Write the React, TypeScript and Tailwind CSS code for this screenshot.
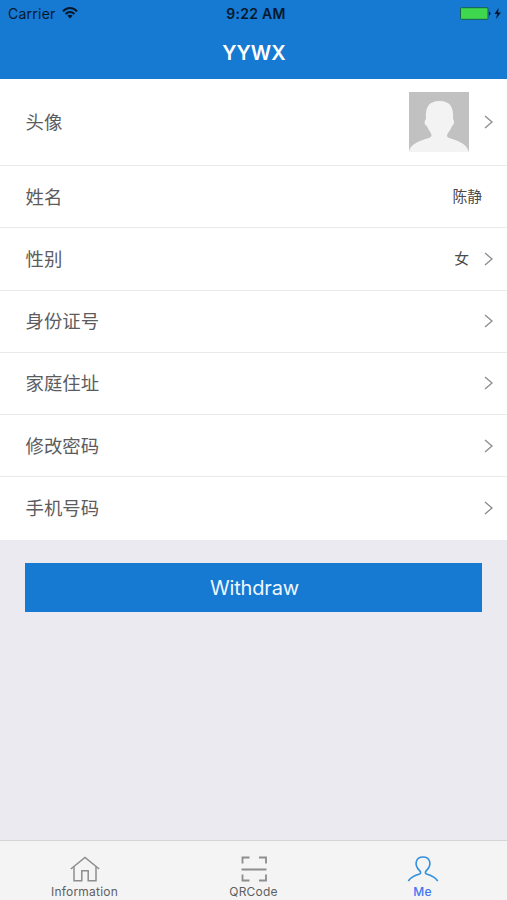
interface ProfileRow {
  label: string
  value?: string
  link?: boolean
}

const rows: ProfileRow[] = [
  { label: '姓名', value: '陈静' },
  { label: '性别', value: '女', link: true },
  { label: '身份证号', link: true },
  { label: '家庭住址', link: true },
  { label: '修改密码', link: true },
  { label: '手机号码', link: true },
]

function Chevron() {
  return (
    <svg className="ml-[15px] h-[14px] w-[9px] shrink-0" viewBox="0 0 9 14" fill="none" stroke="#8c8c8e" strokeWidth="1.3">
      <path d="M1 1l7 6-7 6" />
    </svg>
  )
}

function StatusBar() {
  return (
    <div className="grid h-[27px] grid-cols-3 items-center pt-px pr-1 pl-[8px] text-[#06182b]">
      <div className="flex items-center gap-[6px]">
        <span className="text-[14px] leading-none tracking-[0.25px]">Carrier</span>
        <svg className="mb-[2px] h-[12px] w-[16px]" viewBox="0 0 16 12" fill="none" stroke="currentColor" strokeWidth="2">
          <path d="M1 4.3C5-.1 11-.1 15 4.3" />
          <path d="M3.6 7C6.1 4.4 9.9 4.4 12.4 7" />
          <path d="M5.4 8.8C6.9 7.3 9.1 7.3 10.6 8.8L8 11.6z" fill="currentColor" stroke="none" />
        </svg>
      </div>
      <span className="pl-px text-center text-[14px] leading-none font-semibold tracking-[0.3px] whitespace-nowrap">9:22 AM</span>
      <div className="flex items-center justify-end">
        <svg className="mb-px h-[13px] w-[43px]" viewBox="0 0 43 13">
          <rect x="0.5" y="0.7" width="27.5" height="11.6" rx="1" fill="#3ed74d" stroke="#17604f" />
          <path d="M29 4.5c1.8.3 1.8 3.7 0 4z" fill="currentColor" />
          <path d="M38.5 1l-4 6h2.7L36 12l5-6.6h-2.8z" fill="currentColor" />
        </svg>
      </div>
    </div>
  )
}

function Avatar() {
  return (
    <svg className="h-[60px] w-[60px]" viewBox="0 0 60 60">
      <rect width="60" height="60" fill="#c1c1c1" />
      <path
        d="M0 60C1 51 14 48 21 45.5C25 43 20 40 18 34C15 33 15 29 17 27C16 15 20 9 30.5 9C41 9 45 15 44 27C46 29 45 33 43 34C41 40 36 43 39 45.5C46 48 58 51 60 60Z"
        fill="#f3f3f3"
      />
    </svg>
  )
}

function HomeIcon() {
  return (
    <svg className="h-[28px] w-[32px]" viewBox="0 0 32 28" fill="none" stroke="#8d8d8d" strokeWidth="1.5">
      <path d="M1.8 14L16 2.5 30.2 14" />
      <path d="M5 11.8V25.8H12.8V15.8H19.2V25.8H27V11.8" />
    </svg>
  )
}

function ScanIcon() {
  return (
    <svg className="h-[28px] w-[32px]" viewBox="0 0 32 28" fill="none" stroke="#8d8d8d" strokeWidth="1.8">
      <path d="M4.5 8.5V2.5H11.5M21 2.5H28V8.5M4.5 19.5V25.5H11.5M21 25.5H28V19.5M3.5 14.5H28.5" />
    </svg>
  )
}

function PersonIcon() {
  return (
    <svg className="h-[28px] w-[32px]" viewBox="0 0 32 28" fill="none" stroke="#3390dc" strokeWidth="1.6">
      <path d="M1.3 26C4 22 8 20.3 12.6 19C14.2 18.2 13.8 17 12.4 15.4C6.8 10 8.6 2 16 2C23.4 2 25.2 10 19.6 15.4C18.2 17 17.8 18.2 19.4 19C24 20.3 28 22 30.7 26" />
    </svg>
  )
}

const tabs = [
  { label: 'Information', icon: <HomeIcon />, active: false },
  { label: 'QRCode', icon: <ScanIcon />, active: false },
  { label: 'Me', icon: <PersonIcon />, active: true },
]

export default function App() {
  return (
    <div className="flex h-[900px] w-full flex-col overflow-hidden bg-[#ebeaf0] font-['Inter','Noto_Sans_CJK_SC',sans-serif]">
      <header className="h-[79px] shrink-0 bg-[#1679d2]">
        <StatusBar />
        <h1 className="pt-[11px] pl-px text-center text-[20px] leading-[30px] font-semibold text-white">
          YYWX
        </h1>
      </header>

      <main className="flex flex-1 flex-col">
        <section className="bg-white text-[#5c5c60]">
          <div className="flex h-[87px] items-center border-b border-[#e9e9eb] pr-[14px] pl-[25.5px]">
            <span className="flex-1 text-[18.4px] leading-6">头像</span>
            <Avatar />
            <Chevron />
          </div>
          {rows.map((row) => (
            <div
              key={row.label}
              className={`flex h-[62.25px] items-center border-b border-[#e9e9eb] pl-[25.5px] last:border-0 ${row.link ? 'pr-[14px]' : 'pr-[25px]'}`}
            >
              <span className="flex-1 text-[18.4px] leading-6">{row.label}</span>
              {row.value && <span className="text-[14.8px] leading-5 text-[#4a4a4a]">{row.value}</span>}
              {row.link && <Chevron />}
            </div>
          ))}
        </section>

        <button className="mx-[25px] mt-[23.5px] h-[49px] bg-[#1679d2] pt-px pl-[2px] text-[20px] tracking-[-0.15px] text-[#eef7ff]">
          Withdraw
        </button>
      </main>

      <nav className="grid h-[60px] shrink-0 grid-cols-3 border-t border-[#d5d4d9] bg-[#f4f4f4]">
        {tabs.map((tab) => (
          <div key={tab.label} className="flex flex-col items-center pt-[14px]">
            {tab.icon}
            <span
              className={`mt-[2px] text-[12px] leading-[13px] tracking-[0.2px] ${tab.active ? 'font-medium text-[#3f75f2]' : 'text-[#5f5f5f]'}`}
            >
              {tab.label}
            </span>
          </div>
        ))}
      </nav>
    </div>
  )
}
